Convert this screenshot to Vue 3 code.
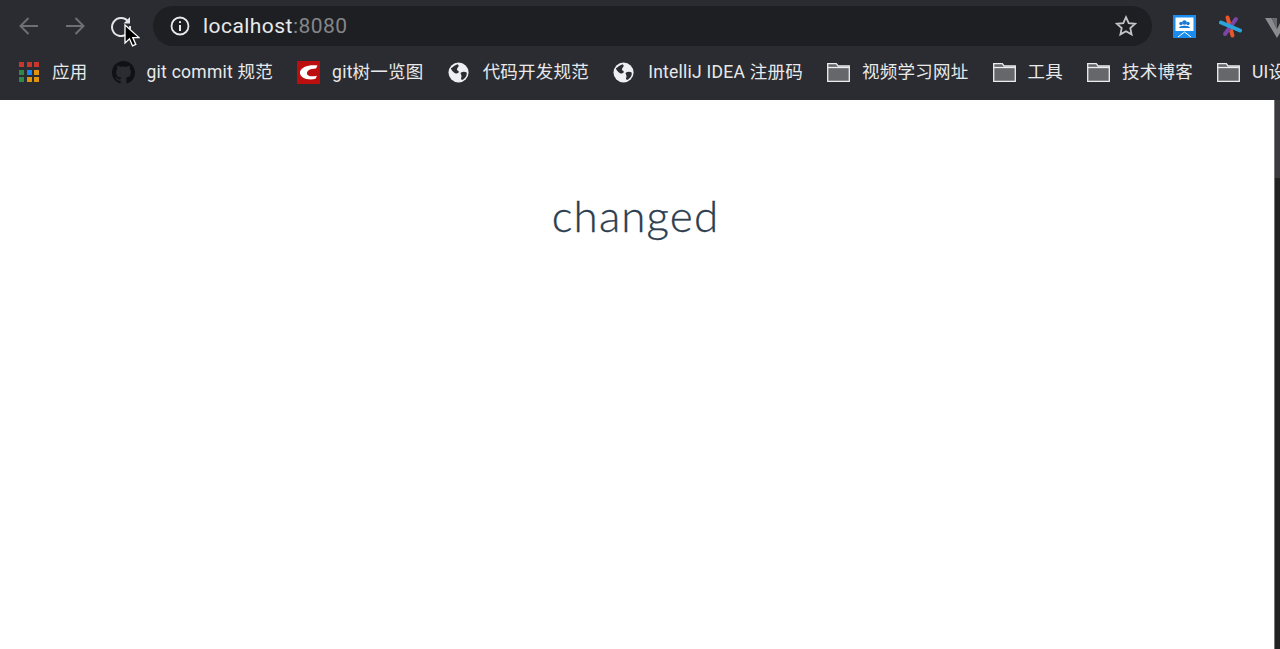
<script setup>
const bookmarks = [
  { icon: 'apps', label: '应用' },
  { icon: 'github', label: 'git commit 规范' },
  { icon: 'csdn', label: 'git树一览图' },
  { icon: 'globe', label: '代码开发规范' },
  { icon: 'globe', label: 'IntelliJ IDEA 注册码' },
  { icon: 'folder', label: '视频学习网址' },
  { icon: 'folder', label: '工具' },
  { icon: 'folder', label: '技术博客' },
  { icon: 'folder', label: 'UI设计' }
]
const appColors = ['#c8372d', '#c8372d', '#c8372d', '#2f8a4a', '#1a85ee', '#e0930f', '#2f8a4a', '#e0930f', '#e0930f']
</script>

<template>
  <div class="page">
    <header class="chrome">
      <div class="toolbar">
        <div class="nav">
          <svg class="nav-icon" viewBox="0 0 22 22" fill="none" stroke="#6e6f73" stroke-width="2">
            <path d="M20 11H2.500M10.500 3L2.500 11l8 8" />
          </svg>
          <svg class="nav-icon" viewBox="0 0 22 22" fill="none" stroke="#6e6f73" stroke-width="2">
            <path d="M2 11h17.500M11.500 3l8 8-8 8" />
          </svg>
          <div class="reload">
            <svg class="nav-icon" viewBox="0 0 22 22" fill="none" stroke="#e4e5e7" stroke-width="2">
              <path d="M18.500 7A9 9 0 1 0 20 11" />
              <path d="M20 2v6.500h-6.500z" fill="#e4e5e7" stroke="none" />
            </svg>
            <svg class="cursor" viewBox="0 0 16 24">
              <path d="M1 1v18l4.500-4.200 3 7 3.300-1.400-3-6.800H15z" fill="#000" stroke="#fff" stroke-width="1.300" />
            </svg>
          </div>
        </div>
        <div class="omnibox">
          <svg class="info" viewBox="0 0 20 20" fill="none" stroke="#e8e9eb" stroke-width="1.800">
            <circle cx="10" cy="10" r="8.500" />
            <path d="M10 9v6M10 5.200v1.800" stroke-width="2" />
          </svg>
          <span class="url">localhost<span class="port">:8080</span></span>
          <svg class="star" viewBox="0 0 22 22" fill="none" stroke="#c4c5c8" stroke-width="1.800">
            <path d="M11 2.200l2.700 5.900 6.300.7-4.700 4.300 1.300 6.300L11 16.300l-5.600 3.100 1.300-6.300L2 8.800l6.300-.7z" />
          </svg>
        </div>
        <div class="extensions">
          <svg class="ext" viewBox="0 0 23 23">
            <rect width="23" height="23" fill="#1a8cf0" />
            <rect x="2.500" y="2.500" width="18" height="13.500" fill="#fff" />
            <circle cx="11.500" cy="7.500" r="2.300" fill="#1a78d6" />
            <circle cx="8" cy="8.500" r="1.700" fill="#1a78d6" />
            <circle cx="15" cy="8.500" r="1.700" fill="#1a78d6" />
            <path d="M6 13c0-3 11-3 11 0z" fill="#1a78d6" />
            <path d="M5 22l6.500-5 6.500 5" fill="none" stroke="#fff" stroke-width="1" />
          </svg>
          <svg class="ext" viewBox="0 0 23 23" fill="none" stroke-linecap="round" stroke-width="4">
            <path d="M8.500 2.500l5 18" stroke="#e8562a" />
            <path d="M17 4L6 19" stroke="#7b45a8" />
            <path d="M2 7.500l19 8" stroke="#2aa5dc" />
          </svg>
          <svg class="ext ext-v" viewBox="0 0 23 23">
            <path d="M0 3h6.500L12 14l5.500-11H24L12 23z" fill="#8a8b8e" />
            <path d="M6.500 3H12v11z" fill="#6a6b6e" />
          </svg>
        </div>
      </div>
      <nav class="bookmarks">
        <div v-for="item in bookmarks" :key="item.label" class="bookmark">
          <span v-if="item.icon === 'apps'" class="apps">
            <i v-for="(c, i) in appColors" :key="i" :style="{ background: c }"></i>
          </span>
          <svg v-else-if="item.icon === 'github'" class="bm-icon" viewBox="0 0 16 16">
            <path fill="#101114" d="M8 0C3.580 0 0 3.580 0 8c0 3.540 2.290 6.530 5.470 7.590.4.070.55-.17.55-.38 0-.19-.01-.82-.01-1.490-2.010.37-2.530-.49-2.690-.94-.09-.23-.48-.94-.82-1.130-.28-.15-.68-.52-.01-.53.630-.01 1.080.58 1.230.82.720 1.210 1.870.870 2.330.660.070-.520.280-.870.510-1.070-1.780-.2-3.640-.89-3.640-3.950 0-.870.310-1.590.820-2.150-.08-.2-.360-1.020.080-2.120 0 0 .670-.21 2.200.820.640-.18 1.320-.27 2-.27s1.360.09 2 .27c1.530-1.040 2.200-.82 2.200-.82.440 1.100.160 1.920.080 2.120.510.560.820 1.270.820 2.150 0 3.070-1.870 3.750-3.650 3.950.290.250.540.730.540 1.480 0 1.070-.01 1.930-.01 2.200 0 .21.150.460.550.380A8.010 8.010 0 0 0 16 8c0-4.420-3.580-8-8-8z" />
          </svg>
          <svg v-else-if="item.icon === 'csdn'" class="bm-icon" viewBox="0 0 23 23">
            <rect width="23" height="23" fill="#bb0f0f" />
            <path d="M20.500 4.500c-4.500-.6-9.500-.3-13 1.500C4 7.800 2.500 10 3 12.500c.6 3 4 5.500 8.500 5.800 2.500.2 5 0 7-.5l1.500-3c-2.500.5-5 .7-7 .4-2.300-.4-3.500-2-3-3.600.6-1.800 2.300-2.900 4.500-3.500 1.500-.4 3.200-.6 4.500-.6z" fill="#fff" />
          </svg>
          <svg v-else-if="item.icon === 'globe'" class="bm-icon" viewBox="0 -1 24 24">
            <circle cx="11" cy="11" r="10.500" fill="#eeeff2" />
            <path d="M3 6.500c2-.5 3.500-3 7-4 1.500 1 1.500 2.500 0 3.500-1 1.500-1 2.500 1 3.500 1 1.500-1 3-3 2.500-2-1-4-2.500-5-5.500zM13 11.500c2-1.500 4.500-1.500 6.500-.5.500 3-1.500 6-4 7.500-2 .5-2.500-1-1.500-2.500.5-1.500-.5-3-1-4.500z" fill="#2b2c31" />
          </svg>
          <svg v-else class="bm-icon" viewBox="0 0 23 19">
            <path d="M.7 18.300V.7h8.600l1.800 2.300h11.200v15.300z" fill="#66676b" stroke="#eceded" stroke-width="1.300" />
            <path d="M.7 4.500h21.600" stroke="#eceded" stroke-width="1.300" />
          </svg>
          <span class="bm-label">{{ item.label }}</span>
        </div>
      </nav>
    </header>
    <main class="content">
      <div class="main-area">
        <h1 class="title">changed</h1>
      </div>
      <div class="edge">
        <div class="edge-top"></div>
      </div>
    </main>
  </div>
</template>

<style>
html, body {
  margin: 0;
  overflow: hidden;
}
</style>

<style scoped>
.page {
  width: 1280px;
  height: 649px;
  display: flex;
  flex-direction: column;
  overflow: hidden;
  background: #fff;
  font-family: Inter, "Noto Sans CJK SC", sans-serif;
}

.chrome {
  height: 100px;
  flex: none;
  background: #2b2c31;
}

.toolbar {
  height: 50px;
  display: flex;
  align-items: flex-start;
  padding: 6px 0 0 18px;
  box-sizing: border-box;
}

.nav {
  width: 135px;
  height: 40px;
  flex: none;
  display: flex;
  align-items: center;
  gap: 24px;
}

.nav-icon {
  width: 22px;
  height: 22px;
  display: block;
}

.reload {
  position: relative;
}

.cursor {
  position: absolute;
  left: 14px;
  top: 9px;
  width: 16px;
  height: 24px;
}

.omnibox {
  width: 999px;
  height: 40px;
  flex: none;
  display: flex;
  align-items: center;
  padding: 0 15px 0 17px;
  box-sizing: border-box;
  border-radius: 20px;
  background: #1e1f23;
}

.info {
  width: 20px;
  height: 20px;
  flex: none;
}

.url {
  margin-left: 13px;
  font-size: 21px;
  letter-spacing: 0.45px;
  color: #e8e9eb;
  font-family: Roboto, sans-serif;
}

.port {
  color: #85868a;
}

.star {
  width: 22px;
  height: 22px;
  margin-left: auto;
}

.extensions {
  display: flex;
  align-items: center;
  height: 40px;
  gap: 23px;
  margin-left: 21px;
  flex: none;
}

.ext {
  width: 23px;
  height: 23px;
  flex: none;
}

.bookmarks {
  height: 50px;
  display: flex;
  align-items: center;
  gap: 24px;
  padding: 0 0 6px 19px;
  box-sizing: border-box;
  white-space: nowrap;
}

.bookmark {
  display: flex;
  align-items: center;
  gap: 12px;
  flex: none;
}

.bm-icon {
  width: 23px;
  height: 23px;
  flex: none;
  display: block;
}

.apps {
  width: 20px;
  height: 20px;
  margin-right: 1px;
  display: grid;
  grid-template-columns: repeat(3, 5px);
  grid-auto-rows: 5px;
  gap: 2.500px;
}

.apps i {
  display: block;
}

.bm-label {
  font-size: 17.500px;
  letter-spacing: 0.25px;
  line-height: 24px;
  color: #e8e9eb;
  font-family: Roboto, "Noto Sans CJK SC", sans-serif;
}

.content {
  flex: 1;
  display: flex;
  min-height: 0;
}

.main-area {
  flex: 1;
  padding-right: 3px;
  text-align: center;
}

.title {
  margin: 87px 0 0;
  font-family: Lato, sans-serif;
  font-size: 44px;
  font-weight: 300;
  letter-spacing: 1.1px;
  -webkit-text-stroke: 0.3px #2c3e50;
  line-height: 56px;
  color: #2c3e50;
}

.edge {
  width: 6px;
  flex: none;
  background: #222;
  border-left: 1px solid #777;
  box-sizing: border-box;
}

.edge-top {
  height: 78px;
  background: #3a3b3e;
}
</style>
